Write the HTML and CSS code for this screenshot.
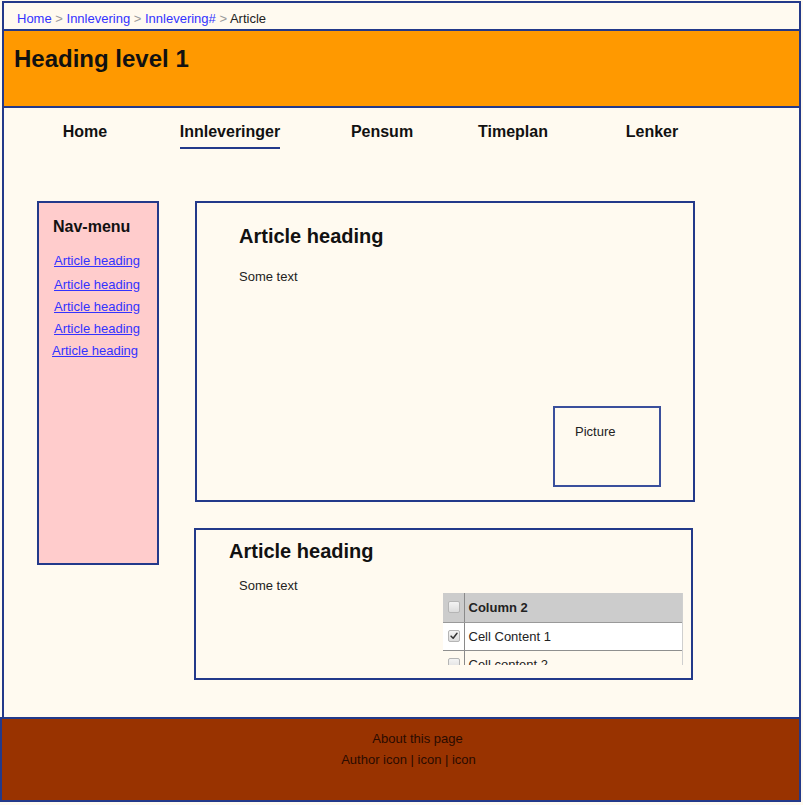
FILE: index.html
```html
<!DOCTYPE html>
<html lang="no">
<head>
  <meta charset="UTF-8">
  <meta name="viewport" content="width=device-width, initial-scale=1.0">
  <title>Article</title>
  <link rel="stylesheet" href="styles.css">
</head>
<body>
  <div class="page">
    <div class="breadcrumb">
      <a href="#">Home</a> <span class="sep">&gt;</span>
      <a href="#">Innlevering</a> <span class="sep">&gt;</span>
      <a href="#">Innlevering#</a> <span class="sep">&gt;</span>
      <span class="current">Article</span>
    </div>

    <header class="site-header">
      <h1>Heading level 1</h1>
    </header>

    <nav class="main-nav">
      <ul>
        <li><a href="#">Home</a></li>
        <li><a href="#" class="active">Innleveringer</a></li>
        <li><a href="#">Pensum</a></li>
        <li><a href="#">Timeplan</a></li>
        <li><a href="#">Lenker</a></li>
      </ul>
    </nav>

    <main class="content">
      <aside class="side-menu">
        <h2>Nav-menu</h2>
        <ul>
          <li><a href="#">Article heading</a></li>
          <li><a href="#">Article heading</a></li>
          <li><a href="#">Article heading</a></li>
          <li><a href="#">Article heading</a></li>
          <li class="last"><a href="#">Article heading</a></li>
        </ul>
      </aside>

      <div class="articles">
        <article class="article article-one">
          <h2>Article heading</h2>
          <p>Some text</p>
          <div class="picture">Picture</div>
        </article>

        <article class="article article-two">
          <h2>Article heading</h2>
          <p>Some text</p>
          <div class="grid-wrap">
            <table class="grid">
              <tr class="head">
                <td class="box-cell"><span class="check"></span></td>
                <td>Column 2</td>
              </tr>
              <tr class="row-white">
                <td class="box-cell"><span class="check checked">
                  <svg viewBox="0 0 12 12"><path d="M2.5 6.2 L5 8.6 L9.6 2.8" fill="none" stroke="#333" stroke-width="1.8" stroke-linecap="round" stroke-linejoin="round"/></svg>
                </span></td>
                <td>Cell Content 1</td>
              </tr>
              <tr>
                <td class="box-cell"><span class="check"></span></td>
                <td>Cell content 2</td>
              </tr>
            </table>
          </div>
        </article>
      </div>
    </main>
  </div>

  <footer class="site-footer">
    <p>About this page</p>
    <p class="footer-icons">Author icon | icon | icon</p>
  </footer>
</body>
</html>
```

FILE: styles.css
```css
* {
  margin: 0;
  padding: 0;
  box-sizing: border-box;
  font-family: 'Liberation Sans', Arial, sans-serif;
}

body {
  background-color: #fffaf0;
  color: #222;
  font-size: 13px;
}

.page {
  margin: 1px 2px 0 2px;
  height: 716px;
  border: 2px solid #23398a;
  border-bottom: none;
}

/* breadcrumb */
.breadcrumb {
  height: 26px;
  padding: 8px 0 0 13px;
  line-height: 15px;
}

.breadcrumb a {
  color: #3333ff;
  text-decoration: none;
}

.breadcrumb .sep {
  color: #999;
}

.breadcrumb .current {
  color: #222;
}

/* header */
.site-header {
  height: 79px;
  background-color: #ff9900;
  border-top: 2px solid #23398a;
  border-bottom: 2px solid #23398a;
  padding: 14px 0 0 10px;
}

.site-header h1 {
  font-size: 24px;
  line-height: 28px;
  font-weight: bold;
  color: #111;
}

/* top navigation */
.main-nav ul {
  list-style: none;
  display: grid;
  grid-template-columns: 130px 160px 144px 118px 160px;
  padding: 14px 0 0 16px;
}

.main-nav li {
  text-align: center;
}

.main-nav a {
  display: inline-block;
  font-size: 16px;
  line-height: 19px;
  font-weight: bold;
  color: #111;
  text-decoration: none;
  padding-bottom: 6px;
  border-bottom: 2px solid transparent;
}

.main-nav a.active {
  border-bottom-color: #23398a;
}

/* content */
.content {
  display: flex;
  align-items: flex-start;
  gap: 36px;
  padding: 52px 0 0 33px;
}

.side-menu {
  width: 122px;
  height: 364px;
  background-color: #ffcccc;
  border: 2px solid #23398a;
  padding: 14px 0 0 14px;
}

.side-menu h2 {
  font-size: 16px;
  line-height: 19px;
  font-weight: bold;
  color: #111;
  margin-bottom: 17px;
}

.side-menu ul {
  list-style: none;
}

.side-menu li {
  line-height: 15px;
  margin-bottom: 7px;
  padding-left: 1px;
}

.side-menu li:first-child {
  margin-bottom: 9px;
}

.side-menu li.last {
  padding-left: 0;
  margin-left: -1px;
}

.side-menu a {
  color: #3333ff;
  text-decoration: underline;
}

.articles {
  display: flex;
  flex-direction: column;
  gap: 26px;
}

.article {
  border: 2px solid #23398a;
}

.article h2 {
  font-size: 20px;
  line-height: 23px;
  font-weight: bold;
  color: #111;
}

.article p {
  line-height: 15px;
}

.article-one {
  width: 500px;
  height: 301px;
  padding: 22px 0 0 42px;
  display: flex;
  flex-direction: column;
}

.article-one p {
  margin-top: 21px;
}

.picture {
  width: 108px;
  height: 81px;
  margin: auto 32px 13px auto;
  border: 2px solid #3a4f9c;
  padding: 16px 0 0 20px;
  line-height: 15px;
}

.article-two {
  width: 499px;
  height: 152px;
  margin-left: -1px;
  padding: 10px 0 0 33px;
}

.article-two p {
  margin: 15px 0 0 10px;
}

/* small data grid */
.grid-wrap {
  width: 240px;
  height: 72px;
  margin-left: 214px;
  overflow: hidden;
  border-right: 1px solid #cfcfcf;
}

.grid {
  width: 100%;
  border-collapse: collapse;
}

.grid td {
  height: 28px;
  padding: 0 4px;
  border-bottom: 1px solid #8f8f8f;
  color: #222;
  font-size: 13px;
  vertical-align: middle;
}

.grid tr.head td {
  height: 29px;
  background-color: #cccccc;
  font-weight: bold;
  border-bottom-color: #999;
}

.grid tr.row-white td {
  background-color: #fff;
}

.grid td.box-cell {
  width: 21px;
  padding: 0 0 0 5px;
  border-right: 1px solid #8a8a8a;
}

.check {
  display: block;
  width: 12px;
  height: 12px;
  border: 1px solid #b5b5b5;
  border-radius: 2px;
  background: linear-gradient(#f4f4f4, #dcdcdc);
}

.check svg {
  display: block;
  width: 10px;
  height: 10px;
}

/* footer */
.site-footer {
  width: 801px;
  height: 85px;
  background-color: #993300;
  border: 2px solid #23398a;
  padding-top: 9px;
  padding-left: 34px;
  text-align: center;
  color: #2a0b00;
  line-height: 21px;
}

.footer-icons {
  padding-right: 18px;
}
```
